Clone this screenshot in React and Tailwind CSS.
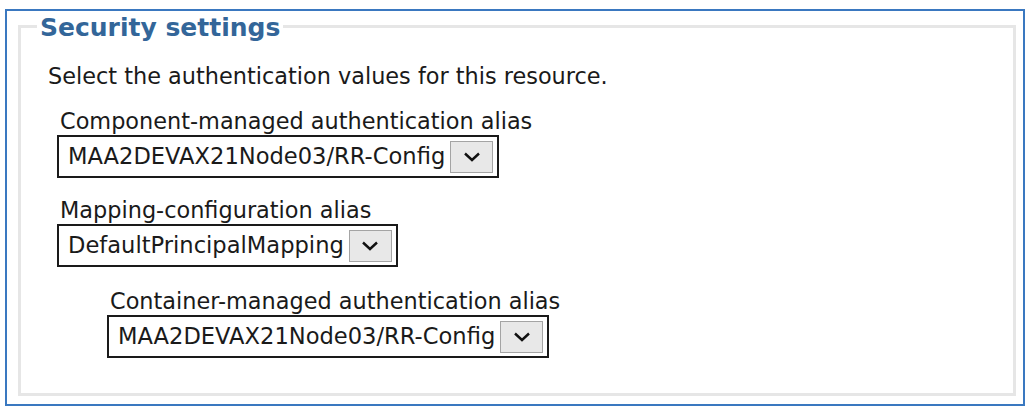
import React from "react";

const Select = ({ value }) => (
  <div className="inline-flex items-center border-2 border-[#1a1a1a] bg-white pl-[9px] pr-[4px]">
    <span className="text-[22.6px] text-[#1a1a1a] leading-[39px]">{value}</span>
    <span className="ml-[5px] flex h-[32px] w-[43px] items-center justify-center border border-[#a4a4a4] bg-[#e8e8e8]">
      <svg width="20" height="12" viewBox="0 0 20 12">
        <path d="M3 2.5 L10 9 L17 2.5" fill="none" stroke="#111" strokeWidth="2.4" />
      </svg>
    </span>
  </div>
);

const Field = ({ label, value }) => (
  <div>
    <div className="pl-[3px] text-[22.4px] text-[#1a1a1a] leading-[28px]">{label}</div>
    <Select value={value} />
  </div>
);

export default function App() {
  return (
    <div className="bg-white w-[1031px] h-[411px] pt-[9px] pl-[5px]" style={{ fontFamily: '"DejaVu Sans", Verdana, sans-serif' }}>
      <div className="w-[1020px] h-[397px] border-2 border-[#3a78c0] pl-[11px]">
        <fieldset className="w-[998px] h-[385px] border-[3px] border-[#e6e6e6] pl-[27px] pr-[8px] m-0">
          <legend className="px-[3px] pt-[3px] -ml-[11px] text-[25px] font-bold text-[#336699] leading-[28px]">
            Security settings
          </legend>
          <div className="mt-[20px] text-[22.4px] text-[#1a1a1a] leading-[28px]">
            Select the authentication values for this resource.
          </div>
          <div className="mt-[17px] pl-[9px] flex flex-col items-start">
            <Field label="Component-managed authentication alias" value="MAA2DEVAX21Node03/RR-Config" />
            <div className="mt-[18px]">
              <Field label="Mapping-configuration alias" value="DefaultPrincipalMapping" />
            </div>
            <div className="mt-[20px] pl-[50px]">
              <Field label="Container-managed authentication alias" value="MAA2DEVAX21Node03/RR-Config" />
            </div>
          </div>
        </fieldset>
      </div>
    </div>
  );
}
